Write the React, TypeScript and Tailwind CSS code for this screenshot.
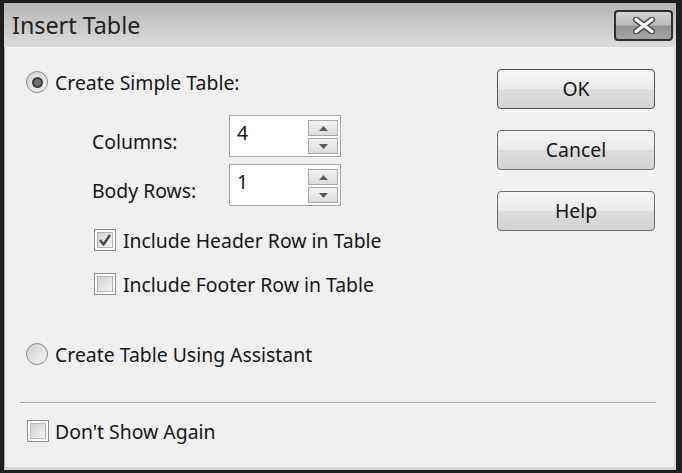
function Radio({ checked = false }: { checked?: boolean }) {
  return (
    <span className="flex h-[22px] w-[22px] shrink-0 items-center justify-center rounded-full border border-[#8c8c8c] bg-linear-to-br from-[#cfcfcf] to-[#f7f7f7]">
      {checked && (
        <span className="flex h-[14px] w-[14px] items-center justify-center rounded-full bg-[#e6e6e6]">
          <span className="h-[11px] w-[11px] rounded-full border-2 border-[#3c3c3c] bg-[#707070]" />
        </span>
      )}
    </span>
  );
}

function Checkbox({ checked = false }: { checked?: boolean }) {
  return (
    <span className="flex h-[22px] w-[22px] shrink-0 items-center justify-center border border-[#8e8e8e] bg-white p-[2px]">
      <span className="flex h-full w-full items-center justify-center border border-[#b4b4b4] bg-linear-to-br from-[#d2d2d2] to-[#f4f4f4]">
        {checked && (
          <svg width="14" height="14" viewBox="0 0 14 14">
            <path d="M2 7 L5.5 11.5 L12 2" fill="none" stroke="#4a4a4a" strokeWidth="2.4" strokeLinejoin="round" />
          </svg>
        )}
      </span>
    </span>
  );
}

function Spin({ value }: { value: string }) {
  return (
    <div className="flex h-[42px] w-[112px] items-start justify-between border border-[#a4a4a4] bg-white pl-[7px] pr-[2px] pt-[4px]">
      <span className="mt-[2px] text-[19.4px] leading-[22px]">{value}</span>
      <div className="flex flex-col gap-[2px]">
        <span className="flex h-[16px] w-[30px] items-center justify-center border border-[#a8a8a8] bg-linear-to-b from-[#f4f4f4] to-[#dcdcdc]">
          <svg width="9" height="5" viewBox="0 0 9 5">
            <path d="M0 5 L4.5 0 L9 5 Z" fill="#5a5a5a" />
          </svg>
        </span>
        <span className="flex h-[16px] w-[30px] items-center justify-center border border-[#a8a8a8] bg-linear-to-b from-[#f4f4f4] to-[#dcdcdc]">
          <svg width="9" height="5" viewBox="0 0 9 5">
            <path d="M0 0 L4.5 5 L9 0 Z" fill="#5a5a5a" />
          </svg>
        </span>
      </div>
    </div>
  );
}

function Button({ label, strong = false }: { label: string; strong?: boolean }) {
  return (
    <button
      className={
        "flex h-[40px] w-full items-center justify-center rounded-[4px] border bg-[linear-gradient(#f4f4f4_0%,#ececec_48%,#dcdcdc_52%,#d2d2d2_100%)] text-[19.4px] leading-[22px] text-[#161616] " +
        (strong ? "border-[#555555]" : "border-[#6e6e6e]")
      }
    >
      {label}
    </button>
  );
}

function CloseButton() {
  return (
    <div className="mt-[7px] flex h-[31px] w-[59px] items-center justify-center rounded-[4px] border-2 border-[#2e2e2e] bg-[linear-gradient(#d2d2d2_0%,#bababa_48%,#949494_52%,#a4a4a4_100%)]">
      <svg width="24" height="17" viewBox="0 0 24 17">
        <path d="M4 2.5 L20 14.5 M20 2.5 L4 14.5" stroke="#4a4a4a" strokeWidth="6" strokeLinecap="round" />
        <path d="M4 2.5 L20 14.5 M20 2.5 L4 14.5" stroke="#ffffff" strokeWidth="3.4" strokeLinecap="round" />
      </svg>
    </div>
  );
}

export default function App() {
  return (
    <div className="h-[473px] w-[682px] bg-[#1f1f1f] pb-[3px] pl-[4px] pr-[6px] pt-[3px] font-['Noto_Sans',sans-serif] text-[#161616]">
      <div className="flex h-full flex-col">
        <div className="flex h-[44px] shrink-0 items-start justify-between bg-linear-to-b from-[#b6b6b6] to-[#dcdcdc] pl-[8px] pr-[3px]">
          <span className="mt-[8px] text-[23.3px] leading-[28px] text-[#222222]">Insert Table</span>
          <CloseButton />
        </div>

        <div className="flex flex-1 flex-col border-b-[3px] border-l border-r-2 border-b-[#d4d4d4] border-l-[#a8a8a8] border-r-[#d8d8d8] bg-[#f0f0f0] text-[19.4px] leading-[22px]">
          <div className="flex">
            <div className="flex flex-1 flex-col pl-[21px] pt-[24px]">
              <label className="flex h-[22px] items-center gap-[7px]">
                <Radio checked />
                <span className="pt-[2px]">Create Simple Table:</span>
              </label>

              <div className="ml-[66px] mt-[22px] grid grid-cols-[137px_112px] gap-y-[7px]">
                <span className="mt-[16px]">Columns:</span>
                <Spin value="4" />
                <span className="mt-[16px]">Body Rows:</span>
                <Spin value="1" />
              </div>

              <div className="ml-[68px] mt-[23px] flex flex-col gap-[22px]">
                <label className="flex h-[22px] items-center gap-[7px]">
                  <Checkbox checked />
                  <span className="pt-[2px]">Include Header Row in Table</span>
                </label>
                <label className="flex h-[22px] items-center gap-[7px]">
                  <Checkbox />
                  <span className="pt-[2px]">Include Footer Row in Table</span>
                </label>
              </div>

              <label className="mt-[48px] flex h-[22px] items-center gap-[7px]">
                <Radio />
                <span className="pt-[2px]">Create Table Using Assistant</span>
              </label>
            </div>

            <div className="mr-[19px] flex w-[158px] flex-col gap-[21px] pt-[22px]">
              <Button label="OK" strong />
              <Button label="Cancel" />
              <Button label="Help" />
            </div>
          </div>

          <div className="ml-[15px] mr-[18px] mt-[37px] border-b border-t border-b-white border-t-[#a6a6a6]" />

          <label className="ml-[22px] mt-[16px] flex h-[22px] items-center gap-[6px]">
            <Checkbox />
            <span className="pt-[2px]">Don't Show Again</span>
          </label>
        </div>
      </div>
    </div>
  );
}
